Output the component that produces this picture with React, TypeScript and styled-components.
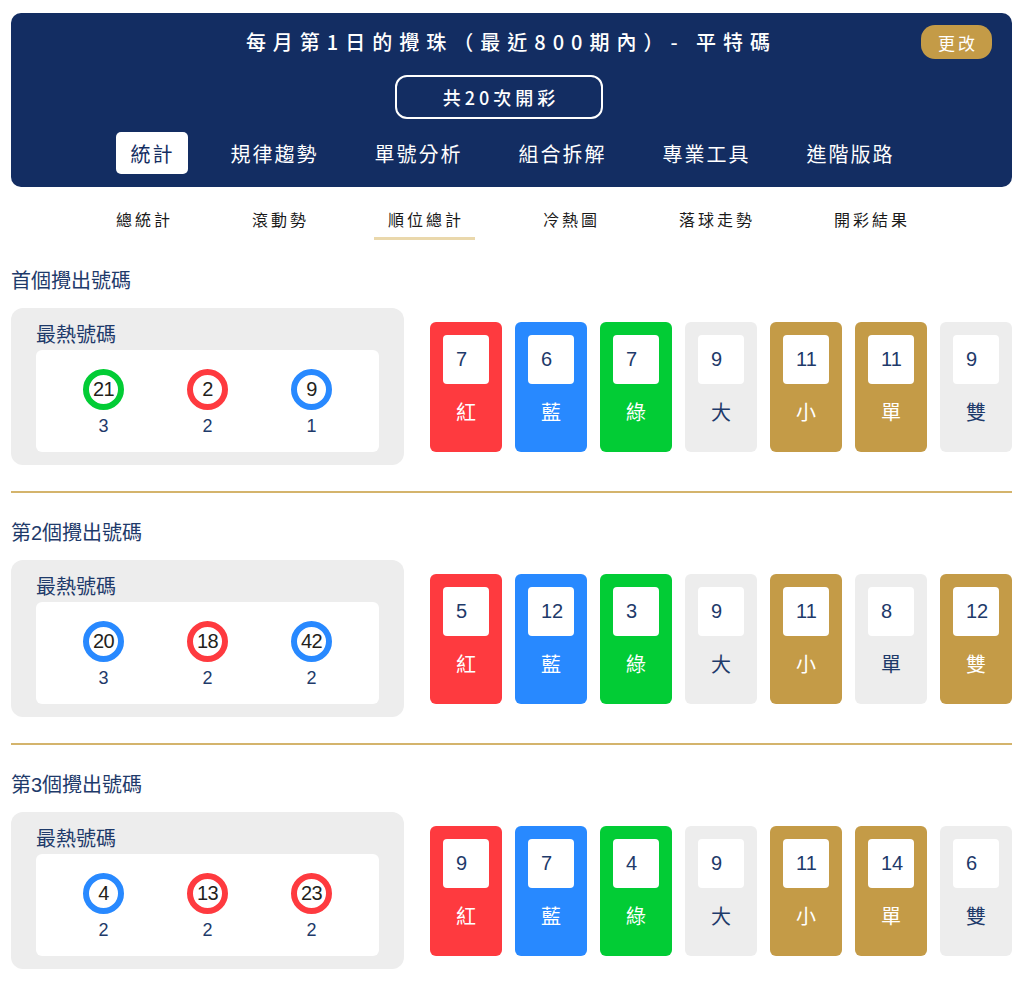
import React from "react";
import styled, { createGlobalStyle } from "styled-components";

// 類型
type Tone = "red" | "blue" | "green" | "gray" | "gold";

type Ball = { num: number; tone: Tone; count: number };
type Card = { value: number; label: string; tone: Tone };
type Section = { title: string; balls: Ball[]; cards: Card[] };

const toneColor: Record<Tone, string> = {
  red: "#fe3a3f",
  blue: "#2889ff",
  green: "#02cc35",
  gray: "#ededed",
  gold: "#c49b47",
};

const mainTabs = ["統計", "規律趨勢", "單號分析", "組合拆解", "專業工具", "進階版路"];
const subTabs = ["總統計", "滾動勢", "順位總計", "冷熱圖", "落球走勢", "開彩結果"];

const sections: Section[] = [
  {
    title: "首個攪出號碼",
    balls: [
      { num: 21, tone: "green", count: 3 },
      { num: 2, tone: "red", count: 2 },
      { num: 9, tone: "blue", count: 1 },
    ],
    cards: [
      { value: 7, label: "紅", tone: "red" },
      { value: 6, label: "藍", tone: "blue" },
      { value: 7, label: "綠", tone: "green" },
      { value: 9, label: "大", tone: "gray" },
      { value: 11, label: "小", tone: "gold" },
      { value: 11, label: "單", tone: "gold" },
      { value: 9, label: "雙", tone: "gray" },
    ],
  },
  {
    title: "第2個攪出號碼",
    balls: [
      { num: 20, tone: "blue", count: 3 },
      { num: 18, tone: "red", count: 2 },
      { num: 42, tone: "blue", count: 2 },
    ],
    cards: [
      { value: 5, label: "紅", tone: "red" },
      { value: 12, label: "藍", tone: "blue" },
      { value: 3, label: "綠", tone: "green" },
      { value: 9, label: "大", tone: "gray" },
      { value: 11, label: "小", tone: "gold" },
      { value: 8, label: "單", tone: "gray" },
      { value: 12, label: "雙", tone: "gold" },
    ],
  },
  {
    title: "第3個攪出號碼",
    balls: [
      { num: 4, tone: "blue", count: 2 },
      { num: 13, tone: "red", count: 2 },
      { num: 23, tone: "red", count: 2 },
    ],
    cards: [
      { value: 9, label: "紅", tone: "red" },
      { value: 7, label: "藍", tone: "blue" },
      { value: 4, label: "綠", tone: "green" },
      { value: 9, label: "大", tone: "gray" },
      { value: 11, label: "小", tone: "gold" },
      { value: 14, label: "單", tone: "gold" },
      { value: 6, label: "雙", tone: "gray" },
    ],
  },
];

export default function App() {
  return (
    <Page>
      <GlobalStyle />
      <Header>
        <Title>每月第1日的攪珠（最近800期內）- 平特碼</Title>
        <ChangeBtn>更改</ChangeBtn>
        <CountRow>
          <CountBtn>共20次開彩</CountBtn>
        </CountRow>
        <Tabs>
          {mainTabs.map((t, i) => (
            <Tab key={t} className={i === 0 ? "active" : ""}>
              {t}
            </Tab>
          ))}
        </Tabs>
      </Header>

      <SubNav>
        {subTabs.map((t) => (
          <SubTab key={t} className={t === "順位總計" ? "selected" : ""}>
            {t}
          </SubTab>
        ))}
      </SubNav>

      {sections.map((s, idx) => (
        <React.Fragment key={s.title}>
          {idx > 0 && <Divider />}
          <SectionTitle>{s.title}</SectionTitle>
          <Row>
            <HotPanel>
              <HotLabel>最熱號碼</HotLabel>
              <HotBox>
                {s.balls.map((b) => (
                  <HotItem key={b.num}>
                    <BallRing $tone={b.tone}>{b.num}</BallRing>
                    <HotCount>{b.count}</HotCount>
                  </HotItem>
                ))}
              </HotBox>
            </HotPanel>
            <Cards>
              {s.cards.map((c) => (
                <StatCard key={c.label} $tone={c.tone}>
                  <StatValue>{c.value}</StatValue>
                  <StatLabel $tone={c.tone}>{c.label}</StatLabel>
                </StatCard>
              ))}
            </Cards>
          </Row>
        </React.Fragment>
      ))}
    </Page>
  );
}

// Styled Components
const GlobalStyle = createGlobalStyle`
  body {
    margin: 0;
    background: #ffffff;
    font-family: "Liberation Sans", "Noto Sans CJK TC", sans-serif;
  }
`;

const Page = styled.div`
  padding: 13px 11px 20px;
`;

const Header = styled.div`
  position: relative;
  background-color: #132d62;
  border-radius: 10px;
  padding: 15px 0 13px;
  display: flex;
  flex-direction: column;
  align-items: center;
`;

const Title = styled.div`
  color: #ffffff;
  font-size: 20px;
  line-height: 28px;
  font-weight: 500;
  letter-spacing: 7px;
  font-family: "Noto Sans CJK TC", sans-serif;
`;

const ChangeBtn = styled.div`
  position: absolute;
  top: 12px;
  right: 20px;
  width: 71px;
  height: 34px;
  border-radius: 14px;
  background-color: #c49b47;
  color: #ffffff;
  font-size: 17px;
  letter-spacing: 3px;
  display: flex;
  align-items: center;
  justify-content: center;
  padding-left: 3px;
  box-sizing: border-box;
  font-family: "Noto Sans CJK TC", sans-serif;
`;

const CountRow = styled.div`
  margin-top: 19px;
  padding-right: 25px;
  display: flex;
  justify-content: center;
`;

const CountBtn = styled.div`
  width: 208px;
  height: 44px;
  box-sizing: border-box;
  border: 2px solid #ffffff;
  border-radius: 12px;
  color: #ffffff;
  font-size: 18px;
  font-weight: 500;
  letter-spacing: 4px;
  display: flex;
  align-items: center;
  justify-content: center;
  padding-left: 4px;
  font-family: "Noto Sans CJK TC", sans-serif;
`;

const Tabs = styled.div`
  margin-top: 13px;
  display: flex;
  gap: 28px;
`;

const Tab = styled.div`
  height: 42px;
  padding: 0 13px 0 15px;
  border-radius: 5px;
  display: flex;
  align-items: center;
  color: #ffffff;
  font-size: 20px;
  font-weight: 400;
  letter-spacing: 2px;
  font-family: "Noto Sans CJK TC", sans-serif;
  &.active {
    background-color: #ffffff;
    color: #132d62;
  }
`;

const SubNav = styled.div`
  margin-top: 12px;
  display: flex;
  justify-content: center;
  gap: 54px;
`;

const SubTab = styled.div`
  padding: 8px 11px 6px 14px;
  line-height: 24px;
  font-size: 16px;
  font-weight: 400;
  letter-spacing: 3px;
  color: #1a1a1a;
  border-bottom: 3px solid transparent;
  font-family: "Noto Sans CJK TC", sans-serif;
  &.selected {
    border-bottom-color: #ead8ac;
  }
`;

const SectionTitle = styled.div`
  margin-top: 27px;
  margin-bottom: 13px;
  font-size: 20px;
  line-height: 28px;
  color: #1e3a6a;
`;

const Divider = styled.div`
  margin-top: 26px;
  height: 2px;
  background-color: #d4b46c;
  & + ${SectionTitle} {
    margin-top: 26px;
  }
`;

const Row = styled.div`
  display: flex;
  align-items: center;
  gap: 26px;
`;

const HotPanel = styled.div`
  width: 393px;
  box-sizing: border-box;
  background-color: #ededed;
  border-radius: 12px;
  padding: 14px 25px 13px;
`;

const HotLabel = styled.div`
  font-size: 20px;
  line-height: 26px;
  color: #1e3a6a;
  margin-bottom: 2px;
`;

const HotBox = styled.div`
  background-color: #ffffff;
  border-radius: 6px;
  padding: 19px 0 15px;
  display: flex;
  justify-content: center;
`;

const HotItem = styled.div`
  width: 104px;
  display: flex;
  flex-direction: column;
  align-items: center;
`;

const BallRing = styled.div<{ $tone: Tone }>`
  width: 41px;
  height: 41px;
  box-sizing: border-box;
  border-radius: 50%;
  border: 6px solid ${(p) => toneColor[p.$tone]};
  background-color: #ffffff;
  display: flex;
  align-items: center;
  justify-content: center;
  font-size: 20px;
  color: #231f1c;
  letter-spacing: -0.5px;
`;

const HotCount = styled.div`
  margin-top: 5px;
  font-size: 18px;
  line-height: 22px;
  color: #1e3a6a;
`;

const Cards = styled.div`
  display: flex;
  gap: 13px;
`;

const StatCard = styled.div<{ $tone: Tone }>`
  width: 72px;
  box-sizing: border-box;
  padding: 13px 13px 26px;
  border-radius: 6px;
  background-color: ${(p) => toneColor[p.$tone]};
  display: flex;
  flex-direction: column;
  align-items: center;
`;

const StatValue = styled.div`
  width: 46px;
  height: 49px;
  box-sizing: border-box;
  padding-left: 13px;
  background-color: #ffffff;
  border-radius: 4px;
  display: flex;
  align-items: center;
  font-size: 20px;
  color: #1e3a6a;
`;

const StatLabel = styled.div<{ $tone: Tone }>`
  margin-top: 14px;
  font-size: 20px;
  line-height: 28px;
  color: ${(p) => (p.$tone === "gray" ? "#1e3a6a" : "#ffffff")};
  font-family: "Noto Sans CJK TC", sans-serif;
`;
